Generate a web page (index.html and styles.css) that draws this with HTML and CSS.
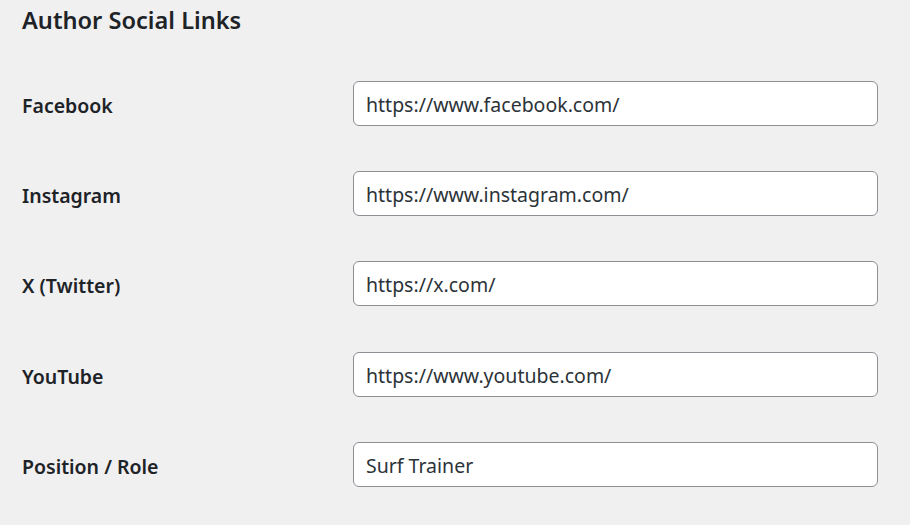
FILE: index.html
```html
<!DOCTYPE html>
<html lang="en">
<head>
<meta charset="utf-8">
<title>Author Social Links</title>
<link rel="stylesheet" href="styles.css">
</head>
<body>
<div class="wrap">
  <h2 class="title">Author Social Links</h2>
  <div class="form">
    <div class="row">
      <label class="label" for="fb">Facebook</label>
      <input class="field" id="fb" type="text" value="https://www.facebook.com/">
    </div>
    <div class="row">
      <label class="label" for="ig">Instagram</label>
      <input class="field" id="ig" type="text" value="https://www.instagram.com/">
    </div>
    <div class="row">
      <label class="label" for="tw">X (Twitter)</label>
      <input class="field" id="tw" type="text" value="https://x.com/">
    </div>
    <div class="row">
      <label class="label" for="yt">YouTube</label>
      <input class="field" id="yt" type="text" value="https://www.youtube.com/">
    </div>
    <div class="row">
      <label class="label" for="role">Position / Role</label>
      <input class="field" id="role" type="text" value="Surf Trainer">
    </div>
  </div>
</div>
</body>
</html>
```

FILE: styles.css
```css
html, body {
  margin: 0;
  padding: 0;
  background: #f0f0f1;
}
body {
  font-family: "Noto Sans", "Open Sans", sans-serif;
  color: #1d2327;
  width: 910px;
  height: 525px;
  overflow: hidden;
}
.wrap {
  padding: 0 32px 0 22px;
}
.title {
  margin: 0;
  padding-top: 2px;
  height: 56.4px;
  font-size: 23.6px;
  font-weight: 600;
  line-height: 36px;
}
.form {
  display: flex;
  flex-direction: column;
}
.row {
  display: grid;
  grid-template-columns: 331px 525px;
  align-items: center;
  padding: 22.6px 0;
}
.label {
  padding-top: 4px;
  font-size: 19.5px;
  font-weight: 600;
  color: #1d2327;
}
.field {
  box-sizing: border-box;
  width: 525px;
  height: 45px;
  margin: 0;
  padding: 2px 12px 0;
  border: 1px solid #8c8f94;
  border-radius: 6px;
  background: #fff;
  font-family: "Noto Sans", "Open Sans", sans-serif;
  font-size: 19.5px;
  color: #2c3338;
  outline: none;
}
```
